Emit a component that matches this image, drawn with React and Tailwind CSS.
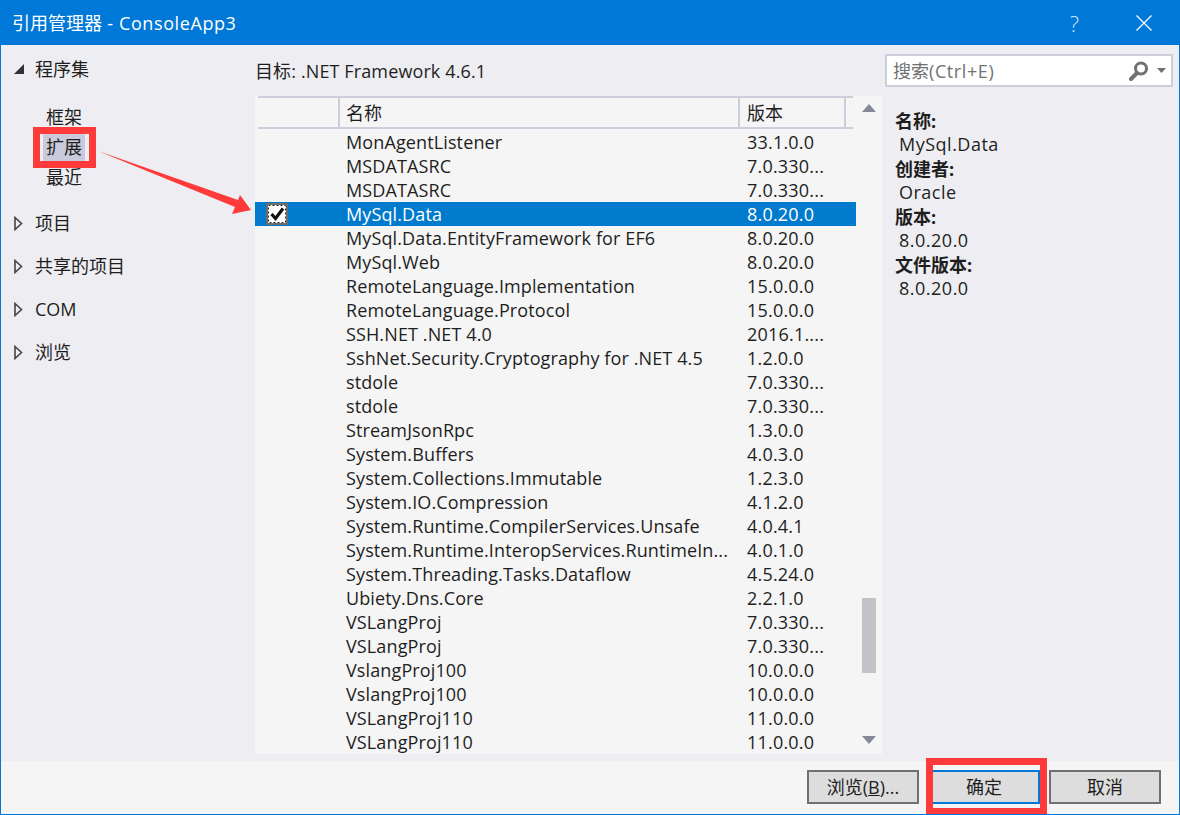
import React from 'react';

const rows = [
  ['MonAgentListener', '33.1.0.0'],
  ['MSDATASRC', '7.0.330...'],
  ['MSDATASRC', '7.0.330...'],
  ['MySql.Data', '8.0.20.0', true],
  ['MySql.Data.EntityFramework for EF6', '8.0.20.0'],
  ['MySql.Web', '8.0.20.0'],
  ['RemoteLanguage.Implementation', '15.0.0.0'],
  ['RemoteLanguage.Protocol', '15.0.0.0'],
  ['SSH.NET .NET 4.0', '2016.1....'],
  ['SshNet.Security.Cryptography for .NET 4.5', '1.2.0.0'],
  ['stdole', '7.0.330...'],
  ['stdole', '7.0.330...'],
  ['StreamJsonRpc', '1.3.0.0'],
  ['System.Buffers', '4.0.3.0'],
  ['System.Collections.Immutable', '1.2.3.0'],
  ['System.IO.Compression', '4.1.2.0'],
  ['System.Runtime.CompilerServices.Unsafe', '4.0.4.1'],
  ['System.Runtime.InteropServices.RuntimeIn...', '4.0.1.0'],
  ['System.Threading.Tasks.Dataflow', '4.5.24.0'],
  ['Ubiety.Dns.Core', '2.2.1.0'],
  ['VSLangProj', '7.0.330...'],
  ['VSLangProj', '7.0.330...'],
  ['VslangProj100', '10.0.0.0'],
  ['VslangProj100', '10.0.0.0'],
  ['VSLangProj110', '11.0.0.0'],
  ['VSLangProj110', '11.0.0.0'],
];

const details = [
  ['名称:', 'MySql.Data'],
  ['创建者:', 'Oracle'],
  ['版本:', '8.0.20.0'],
  ['文件版本:', '8.0.20.0'],
];

const Closed = () => (
  <svg width="9" height="15" viewBox="0 0 9 15" className="shrink-0">
    <path d="M1 1.5 L7.5 7.5 L1 13.5 Z" fill="none" stroke="#444" strokeWidth="1.6" />
  </svg>
);

const Group = ({ label }) => (
  <div className="flex items-center gap-[12px] pl-[13px] h-[24px]">
    <Closed />
    <span>{label}</span>
  </div>
);

const Btn = ({ children, primary }) => (
  <button
    className={`w-[112px] h-[34px] bg-[#dddddd] border-2 text-[18px] text-[#1e1e1e] flex items-center justify-center ${
      primary ? 'border-[#0078d7]' : 'border-[#707070]'
    }`}
  >
    {children}
  </button>
);

export default function App() {
  return (
    <div
      className="relative w-[1180px] h-[815px] flex flex-col overflow-hidden border-x border-b border-[#0078d7] bg-[#eeeef2] text-[18px] leading-[24px] text-[#1e1e1e]"
      style={{ fontFamily: '"Open Sans", "Noto Sans CJK SC", sans-serif' }}
    >
      {/* title bar */}
      <div className="h-[45px] shrink-0 bg-[#0078d7] text-white flex items-center pl-[11px] pr-[27px]">
        <span>
          引用管理器<span className="tracking-[0.6px]"> - ConsoleApp3</span>
        </span>
        <span className="ml-auto mr-[57px] text-[22px] font-light text-[#cfe4f7]">?</span>
        <svg width="16" height="16" viewBox="0 0 16 16" stroke="white" strokeWidth="1.2">
          <path d="M0.5 0.5 L15.5 15.5 M15.5 0.5 L0.5 15.5" />
        </svg>
      </div>

      <div className="flex-1 flex min-h-0">
        {/* left tree */}
        <div className="w-[254px] shrink-0 pt-[12px]">
          <div className="flex items-center gap-[11px] pl-[13px] h-[24px]">
            <svg width="10" height="12" viewBox="0 0 10 12" className="shrink-0">
              <path d="M10 1 L10 11 L0 11 Z" fill="#333" />
            </svg>
            <span>程序集</span>
          </div>
          <div className="mt-[21px] flex flex-col items-start pl-[42px]">
            <div className="h-[30px] flex items-center">
              <span className="h-[27px] px-[3px] flex items-center">框架</span>
            </div>
            <div className="h-[30px] flex items-center">
              <span className="h-[27px] px-[3px] flex items-center bg-[#c9cadb]">扩展</span>
            </div>
            <div className="h-[30px] flex items-center">
              <span className="h-[27px] px-[3px] flex items-center">最近</span>
            </div>
          </div>
          <div className="mt-[19px] flex flex-col gap-[19px]">
            <Group label="项目" />
            <Group label="共享的项目" />
            <Group label="COM" />
            <Group label="浏览" />
          </div>
        </div>

        {/* centre list */}
        <div className="w-[627px] shrink-0 flex flex-col">
          <div className="h-[51px] shrink-0 flex items-center pt-[1px] tracking-[0.12px]">目标: .NET Framework 4.6.1</div>
          <div className="h-[658px] bg-[#f5f5f5] flex">
            <div className="w-[601px]">
              <div className="ml-[3px] mr-[3px] h-[33px] border-y-2 border-[#cccedb] flex items-center">
                <div className="w-[82px] h-full border-r-2 border-[#cccedb]"></div>
                <div className="w-[400px] h-full pl-[6px] flex items-center border-r-2 border-[#cccedb]">名称</div>
                <div className="w-[106px] h-full pl-[7px] flex items-center border-r-2 border-[#cccedb]">版本</div>
              </div>
              <div className="mt-[1px] tracking-[0.12px]">
                {rows.map(([name, ver, sel], i) => (
                  <div key={i} className={`h-[24px] flex items-center ${sel ? 'bg-[#007acc] text-white' : ''}`}>
                    <div className="w-[91px] shrink-0 pl-[11px]">
                      {sel && (
                        <div className="w-[22px] h-[22px] border-2 border-[#6d6d6d] bg-white">
                          <svg width="18" height="18" viewBox="0 0 18 18">
                            <rect x="0.5" y="0.5" width="17" height="17" fill="none" stroke="#222" strokeDasharray="2 2" />
                            <path d="M3.5 9 L7.5 13.5 L15 3.5" fill="none" stroke="#111" strokeWidth="3.2" />
                          </svg>
                        </div>
                      )}
                    </div>
                    <div className="w-[401px] shrink-0 whitespace-nowrap">{name}</div>
                    <div className="whitespace-nowrap tracking-[0.2px]">{ver}</div>
                  </div>
                ))}
              </div>
            </div>
            {/* scrollbar */}
            <div className="w-[26px] flex flex-col items-center py-[8px]">
              <svg width="14" height="8" viewBox="0 0 14 8"><path d="M7 0 L14 8 L0 8 Z" fill="#868999" /></svg>
              <div className="w-[14px] h-[75px] bg-[#c2c3c9] mt-[486px]"></div>
              <svg width="14" height="8" viewBox="0 0 14 8" className="mt-[63px]"><path d="M0 0 L14 0 L7 8 Z" fill="#868999" /></svg>
            </div>
          </div>
        </div>

        {/* right panel */}
        <div className="flex-1 flex flex-col">
          <div className="mt-[9px] ml-[3px] w-[288px] h-[33px] border-2 border-[#cccedb] bg-white flex items-center pl-[6px] pr-[5px] text-[#717171]">
            <span>
              搜索<span className="tracking-[0.6px]">(Ctrl+E)</span>
            </span>
            <svg width="22" height="22" viewBox="0 0 22 22" className="ml-auto" fill="none">
              <circle cx="13" cy="8.5" r="5.5" stroke="#717171" strokeWidth="3" />
              <path d="M9 13 L3 19" stroke="#717171" strokeWidth="4" strokeLinecap="round" />
            </svg>
            <svg width="9" height="5" viewBox="0 0 9 5" className="ml-[7px]"><path d="M0 0 L9 0 L4.5 5 Z" fill="#717171" /></svg>
          </div>
          <div className="mt-[22px] pl-[13px]">
            {details.map(([k, v]) => (
              <div key={k}>
                <div className="font-bold">{k}</div>
                <div className="pl-[4px] h-[24px] leading-[22px] tracking-[0.5px]">{v}</div>
              </div>
            ))}
          </div>
        </div>
      </div>

      {/* footer */}
      <div className="h-[53px] shrink-0 mt-[7px] bg-[#f5f5f5] flex items-start justify-end gap-[9px] pt-[9px] pr-[18px]">
        <Btn>
          <span>浏览(<span className="underline">B</span>)...</span>
        </Btn>
        <Btn primary>确定</Btn>
        <Btn>取消</Btn>
      </div>

      {/* red annotations */}
      <div className="absolute left-[32px] top-[127px] w-[63px] h-[41px] border-[7px] border-[#ff3a3a]"></div>
      <div className="absolute left-[925px] top-[758px] w-[121px] h-[57px] border-[7px] border-[#ff3a3a]"></div>
      <svg className="absolute left-[96px] top-[150px]" width="160" height="70" viewBox="0 0 160 70">
        <path d="M1 1 L141 50 L143 45 L154 60 L135 64 L138 57 Z" fill="#ff3a3a" />
      </svg>
    </div>
  );
}
